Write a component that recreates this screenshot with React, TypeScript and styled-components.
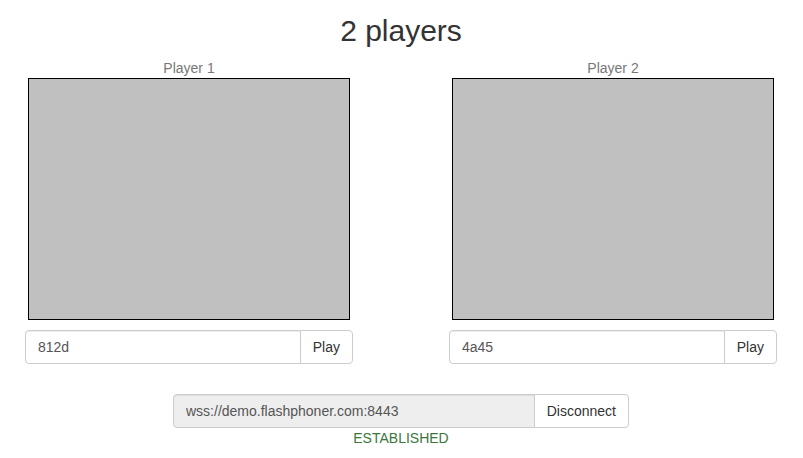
import React from 'react';
import styled, { createGlobalStyle } from 'styled-components';

const GlobalStyle = createGlobalStyle`
  html, body {
    margin: 0;
    padding: 0;
    background: #fff;
  }

  body {
    font-family: "Liberation Sans", Arial, Helvetica, sans-serif;
    font-size: 14px;
    line-height: 20px;
    color: #333;
  }

  * {
    box-sizing: border-box;
  }
`;

const Page = styled.div`
  display: flex;
  flex-flow: column nowrap;
  align-items: center;
  padding-right: 1px;
`;

const Title = styled.h2`
  margin: 14px 0 11px;
  font-size: 30px;
  font-weight: 500;
  line-height: 33px;
  color: #333;
`;

const Players = styled.div`
  display: flex;
  flex-flow: row nowrap;
  gap: 96px;
`;

const PlayerColumn = styled.div`
  display: flex;
  flex-flow: column nowrap;
  align-items: center;
  width: 328px;
`;

const PlayerLabel = styled.div`
  color: #777;
  line-height: 20px;
`;

const Display = styled.div`
  width: 322px;
  height: 242px;
  border: 1px solid #000;
  background: #c0c0c0;
`;

const InputGroup = styled.div<{ $width: number; $top: number }>`
  display: flex;
  flex-flow: row nowrap;
  width: ${p => p.$width}px;
  height: 34px;
  margin-top: ${p => p.$top}px;
`;

const Field = styled.input`
  flex: 1 1 auto;
  min-width: 0;
  height: 34px;
  padding: 6px 12px;
  border: 1px solid #ccc;
  border-radius: 4px 0 0 4px;
  box-shadow: inset 0 1px 1px rgba(0, 0, 0, 0.075);
  font: inherit;
  color: #555;
  background: #fff;
  outline: none;

  &:disabled {
    background: #eee;
    color: #555;
  }
`;

const Button = styled.button`
  flex: 0 0 auto;
  height: 34px;
  margin-left: -1px;
  padding: 6px 12px;
  border: 1px solid #ccc;
  border-radius: 0 4px 4px 0;
  background: #fff;
  font: inherit;
  color: #333;
  cursor: pointer;
`;

const Status = styled.div`
  color: #3c763d;
  line-height: 20px;
`;

type PlayerProps = Readonly<{
  label: string;
  stream: string;
}>;

const Player: React.FunctionComponent<PlayerProps> = props => (
  <PlayerColumn>
    <PlayerLabel>{props.label}</PlayerLabel>
    <Display />
    <InputGroup $width={328} $top={10}>
      <Field type="text" defaultValue={props.stream} />
      <Button type="button">Play</Button>
    </InputGroup>
  </PlayerColumn>
);

export default function App() {
  return (
    <>
      <GlobalStyle />
      <Page>
        <Title>2 players</Title>
        <Players>
          <Player label="Player 1" stream="812d" />
          <Player label="Player 2" stream="4a45" />
        </Players>
        <InputGroup $width={456} $top={30}>
          <Field type="text" defaultValue="wss://demo.flashphoner.com:8443" disabled />
          <Button type="button">Disconnect</Button>
        </InputGroup>
        <Status>ESTABLISHED</Status>
      </Page>
    </>
  );
}
